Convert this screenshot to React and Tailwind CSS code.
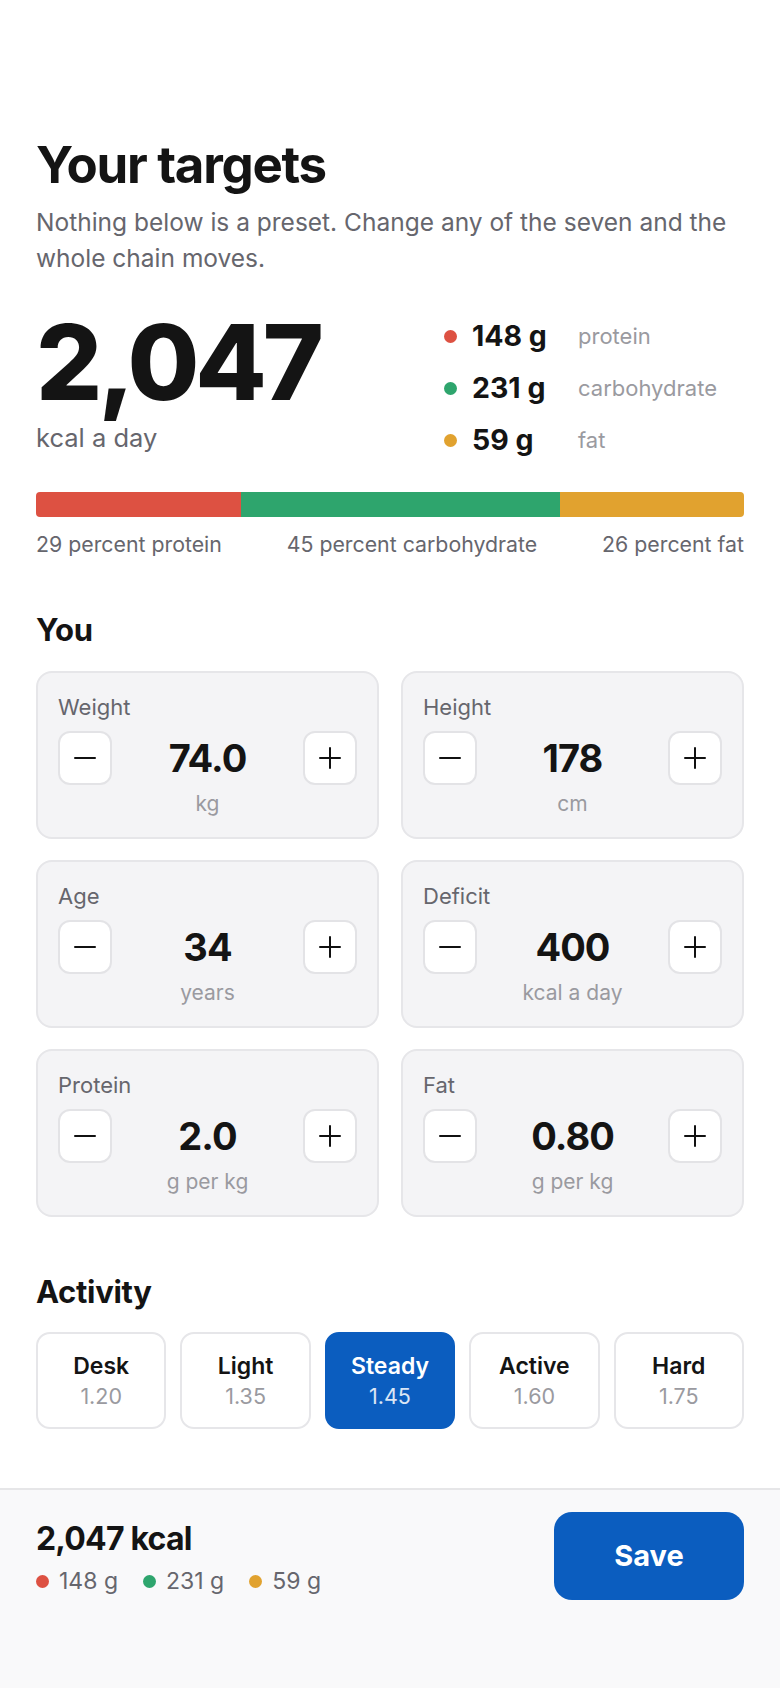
import React from "react";

const macros = [
  { grams: "148 g", name: "protein", dot: "bg-[#dd5142]" },
  { grams: "231 g", name: "carbohydrate", dot: "bg-[#2ea56d]" },
  { grams: "59 g", name: "fat", dot: "bg-[#e1a22f]" },
];

const fields = [
  { label: "Weight", value: "74.0", unit: "kg" },
  { label: "Height", value: "178", unit: "cm" },
  { label: "Age", value: "34", unit: "years" },
  { label: "Deficit", value: "400", unit: "kcal a day" },
  { label: "Protein", value: "2.0", unit: "g per kg" },
  { label: "Fat", value: "0.80", unit: "g per kg" },
];

const levels = [
  { name: "Desk", factor: "1.20" },
  { name: "Light", factor: "1.35" },
  { name: "Steady", factor: "1.45", active: true },
  { name: "Active", factor: "1.60" },
  { name: "Hard", factor: "1.75" },
];

const MinusIcon = () => (
  <svg width="22" height="22" viewBox="0 0 22 22" fill="none">
    <line x1="1" y1="11" x2="21" y2="11" stroke="#111" strokeWidth="2" strokeLinecap="round" />
  </svg>
);

const PlusIcon = () => (
  <svg width="22" height="22" viewBox="0 0 22 22" fill="none">
    <line x1="1" y1="11" x2="21" y2="11" stroke="#111" strokeWidth="2" strokeLinecap="round" />
    <line x1="11" y1="1" x2="11" y2="21" stroke="#111" strokeWidth="2" strokeLinecap="round" />
  </svg>
);

const Stepper = ({ label, value, unit }) => (
  <div className="bg-[#f4f4f6] border-2 border-[#e6e6e9] rounded-[16px] p-5">
    <div className="text-[22px] leading-[28px] text-[#66666d]">{label}</div>
    <div className="flex items-center justify-between mt-[10px]">
      <button className="w-[54px] h-[54px] flex items-center justify-center bg-white border-2 border-[#e3e3e6] rounded-[12px]">
        <MinusIcon />
      </button>
      <div className="text-[38px] leading-[46px] font-bold tracking-tight text-[#141414]">
        {value}
      </div>
      <button className="w-[54px] h-[54px] flex items-center justify-center bg-white border-2 border-[#e3e3e6] rounded-[12px]">
        <PlusIcon />
      </button>
    </div>
    <div className="text-center text-[21px] leading-[26px] text-[#9a9aa0] mt-[6px]">{unit}</div>
  </div>
);

export default function App() {
  return (
    <div className="min-h-screen flex flex-col bg-white font-['Inter',sans-serif] text-[#141414]">
      <main className="flex-1 px-9 pt-[137px]">
        {/* header */}
        <h1 className="text-[51px] leading-[56px] font-bold tracking-[-0.025em]">Your targets</h1>
        <p className="text-[24.5px] leading-[36px] text-[#66666d] mt-[11px]">
          Nothing below is a preset. Change any of the seven and the whole chain moves.
        </p>

        {/* totals */}
        <div className="grid grid-cols-[408px_1fr] items-start mt-[34px]">
          <div>
            <div className="text-[104px] leading-[104px] font-extrabold tracking-[-0.04em]">2,047</div>
            <div className="text-[25.5px] leading-[32px] text-[#66666d] mt-[8px]">kcal a day</div>
          </div>
          <div className="flex flex-col gap-[16px] mt-[8px]">
            {macros.map((m) => (
              <div key={m.name} className="flex items-center h-[36px]">
                <span className={`w-[13px] h-[13px] rounded-full ${m.dot}`}></span>
                <span className="w-[121px] pl-[15px] text-[28.5px] font-bold">{m.grams}</span>
                <span className="text-[22px] text-[#9a9aa0]">{m.name}</span>
              </div>
            ))}
          </div>
        </div>

        {/* split bar */}
        <div className="flex h-[25px] rounded-[4px] overflow-hidden mt-[34px]">
          <div className="w-[29%] bg-[#dd5142]"></div>
          <div className="w-[45%] bg-[#2ea56d]"></div>
          <div className="w-[26%] bg-[#e1a22f]"></div>
        </div>
        <div className="flex justify-between text-[21.3px] leading-[28px] text-[#66666d] mt-[13px]">
          <span>29 percent protein</span>
          <span>45 percent carbohydrate</span>
          <span>26 percent fat</span>
        </div>

        {/* you */}
        <h2 className="text-[31px] leading-[38px] font-bold tracking-[-0.01em] mt-[53px]">You</h2>
        <div className="grid grid-cols-2 gap-x-[22px] gap-y-[21px] mt-[22px]">
          {fields.map((f) => (
            <Stepper key={f.label} {...f} />
          ))}
        </div>

        {/* activity */}
        <h2 className="text-[31px] leading-[38px] font-bold tracking-[-0.01em] mt-[56px]">Activity</h2>
        <div className="grid grid-cols-5 gap-[14px] mt-[21px]">
          {levels.map((l) =>
            l.active ? (
              <button
                key={l.name}
                className="h-[97px] rounded-[14px] bg-[#0b5dbf] border-2 border-[#0b5dbf] flex flex-col items-center justify-center"
              >
                <span className="text-[23px] leading-[28px] font-semibold text-white">{l.name}</span>
                <span className="text-[21.5px] leading-[26px] text-white/85 mt-[3px]">{l.factor}</span>
              </button>
            ) : (
              <button
                key={l.name}
                className="h-[97px] rounded-[14px] bg-white border-2 border-[#e6e6e9] flex flex-col items-center justify-center"
              >
                <span className="text-[23px] leading-[28px] font-semibold text-[#141414]">{l.name}</span>
                <span className="text-[21.5px] leading-[26px] text-[#9a9aa0] mt-[3px]">{l.factor}</span>
              </button>
            )
          )}
        </div>
      </main>

      {/* sticky summary */}
      <footer className="h-[200px] border-t-2 border-[#e6e6e8] bg-[#f9f9fa] px-9 pt-[22px] flex justify-between items-start">
        <div className="mt-[7px]">
          <div className="text-[32px] leading-[40px] font-bold tracking-tight">2,047 kcal</div>
          <div className="flex items-center text-[23px] leading-[28px] text-[#66666d] mt-[8px]">
            <span className="w-[13px] h-[13px] rounded-full bg-[#dd5142]"></span>
            <span className="ml-[10px]">148 g</span>
            <span className="w-[13px] h-[13px] rounded-full bg-[#2ea56d] ml-[25px]"></span>
            <span className="ml-[10px]">231 g</span>
            <span className="w-[13px] h-[13px] rounded-full bg-[#e1a22f] ml-[25px]"></span>
            <span className="ml-[10px]">59 g</span>
          </div>
        </div>
        <button className="w-[190px] h-[88px] rounded-[18px] bg-[#0b5dbf] text-white text-[29px] font-bold">
          Save
        </button>
      </footer>
    </div>
  );
}
